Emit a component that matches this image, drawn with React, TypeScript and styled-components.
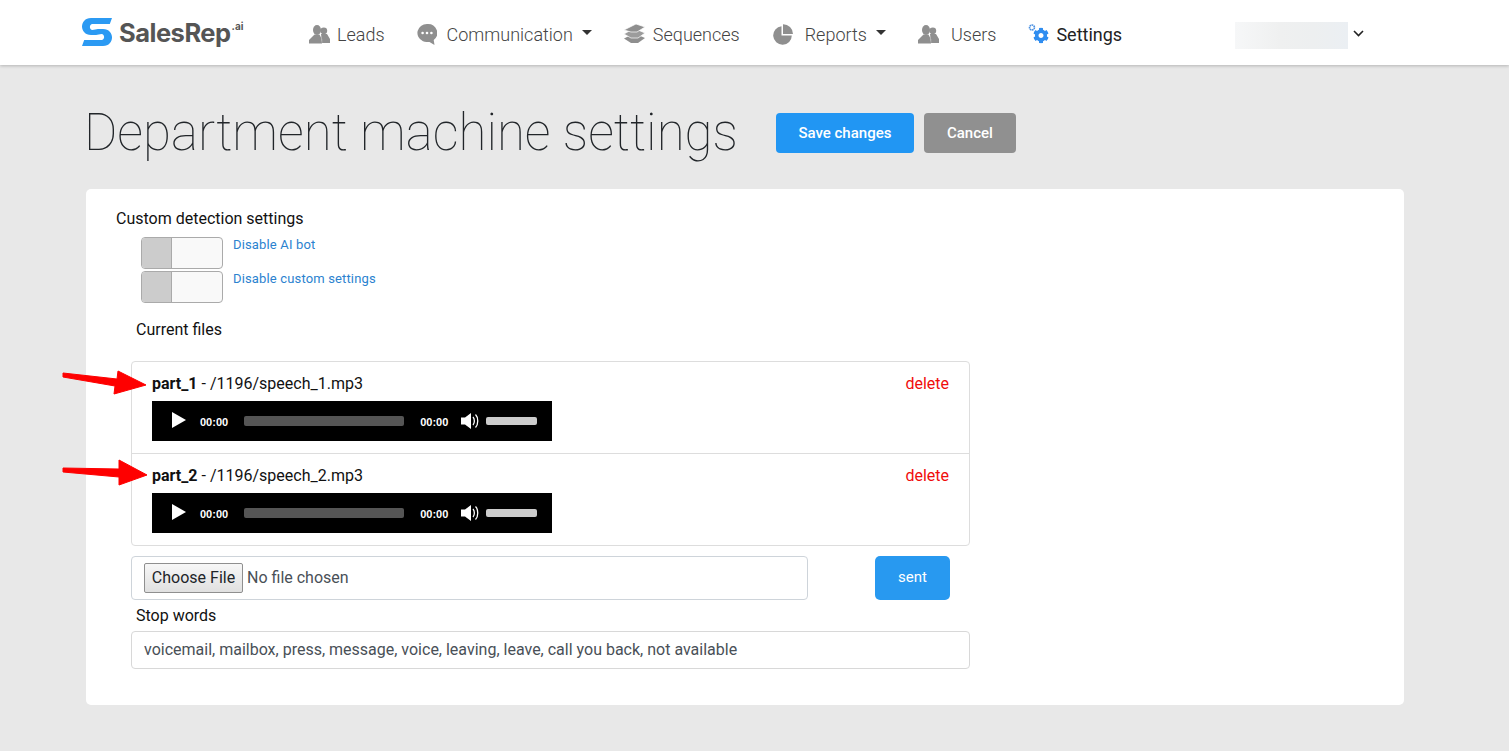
import React from "react";
import styled, { createGlobalStyle } from "styled-components";
import { FaCog } from "react-icons/fa";

const Global = createGlobalStyle`
  * { box-sizing: border-box; }
  html, body { margin: 0; padding: 0; }
  body {
    background: #e8e8e8;
    font-family: Roboto, "Liberation Sans", sans-serif;
    font-size: 16px;
    color: #111;
    overflow: hidden;
  }
`;

const Header = styled.header`
  height: 65px;
  background: #fff;
  box-shadow: 0 1px 3px rgba(0, 0, 0, 0.22);
  display: flex;
  align-items: center;
  padding-left: 82px;
`;
const Logo = styled.div`
  display: flex;
  align-items: center;
  width: 227px;
  height: 30px;
  margin-top: -1px;
`;
const LogoWord = styled.span`
  font-family: Inter, Roboto, sans-serif;
  font-weight: 700;
  font-size: 25.5px;
  letter-spacing: -0.5px;
  color: #555;
  margin-left: 7px;
`;
const LogoSup = styled.sup`
  font-family: Inter, Roboto, sans-serif;
  font-size: 10px;
  font-weight: 700;
  color: #555;
  align-self: flex-start;
  margin: 3px 0 0 1px;
`;
const Nav = styled.nav`
  display: flex;
  align-items: center;
  gap: 32px;
  margin-top: 3px;
`;
const NavItem = styled.a<{ $gap: number; $active?: boolean }>`
  display: flex;
  align-items: center;
  gap: ${(p) => p.$gap}px;
  font-size: 18px;
  font-weight: ${(p) => (p.$active ? 400 : 300)};
  color: ${(p) => (p.$active ? "#222" : "#444")};
`;
const NavLabel = styled.span`
  display: flex;
  align-items: center;
`;
const Caret = styled.i`
  width: 0;
  height: 0;
  margin-left: 9px;
  border-left: 5.5px solid transparent;
  border-right: 5.5px solid transparent;
  border-top: 5.5px solid #333;
  margin-top: -3px;
`;
const UserBlur = styled.div`
  width: 113px;
  height: 27px;
  margin-left: 113px;
  margin-top: 6px;
  background: linear-gradient(90deg, #f6f7f8, #eff0f0 40%, #edeff0 70%, #ebeff3);
`;
const Chevron = styled.svg`
  margin-left: 5px;
  margin-top: 2px;
`;

const Main = styled.main`
  padding: 47px 105px 0 86px;
`;
const TitleRow = styled.div`
  display: flex;
  align-items: center;
  height: 41px;
  margin-bottom: 36px;
`;
const Title = styled.h1`
  margin: 0 38px 0 -2px;
  font-size: 51px;
  font-weight: 100;
  line-height: 41px;
  color: #212529;
  white-space: nowrap;
`;
const Button = styled.button<{ $bg: string; $w: number }>`
  width: ${(p) => p.$w}px;
  height: 40px;
  margin-right: 10px;
  background: ${(p) => p.$bg};
  color: #fff;
  border: 0;
  border-radius: 4px;
  font: 500 15px Roboto, sans-serif;
`;
const Card = styled.section`
  background: #fff;
  border-radius: 5px;
  height: 516px;
  padding: 20px 30px 0 30px;
`;
const SectionLabel = styled.div`
  line-height: 19px;
`;
const Toggles = styled.div`
  padding: 9px 0 0 25px;
`;
const ToggleRow = styled.div`
  display: flex;
  height: 34px;
  gap: 10px;
`;
const Toggle = styled.div`
  width: 82px;
  height: 32px;
  display: flex;
  border: 1px solid #aaa;
  border-radius: 4px;
  overflow: hidden;
  background: #f9f9f9;
`;
const ToggleKnob = styled.div`
  width: 30px;
  background: #ccc;
  border-right: 1px solid #aaa;
`;
const ToggleText = styled.span`
  font-size: 13px;
  line-height: 15px;
  color: #2b82cf;
  letter-spacing: 0.15px;
`;
const SubLabel = styled.div<{ $top: number; $left: number }>`
  padding-left: ${(p) => p.$left}px;
  margin-top: ${(p) => p.$top}px;
  line-height: 19px;
`;
const Form = styled.div`
  width: 839px;
  margin-left: 15px;
`;
const FileList = styled.div`
  margin-top: 22px;
  border: 1px solid #ddd;
  border-radius: 4px;
`;
const FileRow = styled.div`
  position: relative;
  height: 91px;
  padding: 10px 20px 0;
  & + & {
    height: 92px;
    border-top: 1px solid #ddd;
  }
`;
const RowHead = styled.div`
  display: flex;
  justify-content: space-between;
  line-height: 24px;
  margin-bottom: 5px;
`;
const Delete = styled.a`
  color: #f00c0c;
`;
const Player = styled.div`
  width: 400px;
  height: 40px;
  background: #000;
  display: flex;
  align-items: center;
  color: #fff;
  font: 700 11px "Liberation Sans", Arial, sans-serif;
`;
const TimeLabel = styled.span`
  margin-top: 2px;
`;
const PlayIcon = styled.svg`
  margin-left: 20px;
  margin-right: 14px;
  margin-top: -2px;
`;
const Rail = styled.div`
  width: 160px;
  height: 10px;
  margin: 0 16px;
  background: #555;
  border-radius: 2px;
`;
const Volume = styled.div`
  width: 51px;
  height: 8px;
  margin-left: 6px;
  background: #ccc;
  border-radius: 2px;
`;
const MuteIcon = styled.svg`
  margin-left: 13px;
`;
const Arrow = styled.svg`
  position: absolute;
  left: -71px;
  top: 0;
  overflow: visible;
  pointer-events: none;
`;
const UploadRow = styled.div`
  display: flex;
  justify-content: space-between;
  margin-top: 10px;
  padding-right: 20px;
`;
const FileBox = styled.div`
  width: 677px;
  height: 44px;
  border: 1px solid #ced4da;
  border-radius: 4px;
  padding: 6px 12px;
  display: flex;
  align-items: center;
`;
const FileInput = styled.input`
  font: 400 16px Roboto, sans-serif;
  color: #495057;
  &::file-selector-button {
    height: 30px;
    width: 99px;
    margin-right: 4px;
    padding: 0 0 2px;
    font: 400 16px Roboto, sans-serif;
    color: #212529;
    background: linear-gradient(#f7f7f7, #e0e0e0);
    border: 1px solid #8f8f8f;
    border-radius: 2px;
  }
`;
const Sent = styled.button`
  width: 75px;
  height: 44px;
  background: #2899f0;
  color: #fff;
  border: 0;
  border-radius: 5px;
  padding: 0 0 2px;
  font: 400 15px Roboto, sans-serif;
`;
const TextInput = styled.input`
  display: block;
  width: 100%;
  height: 38px;
  margin-top: 6px;
  padding: 0 12px 2px;
  border: 1px solid #d8d8d8;
  border-radius: 4px;
  font: 400 16px Roboto, sans-serif;
  color: #495057;
  outline: none;
`;

const GREY = "#8f8f8f";

const UsersIcon = () => (
  <svg width="21" height="20" viewBox="0 0 21 20">
    <circle cx="14.8" cy="6.8" r="3.4" fill={GREY} />
    <path d="M12 10h6l3 5v4h-8z" fill={GREY} />
    <path d="M12.6 19.5v-4l-3-4" stroke="#fff" strokeWidth="1" fill="none" />
    <ellipse cx="8" cy="6" rx="4" ry="5" fill={GREY} />
    <path d="M5.5 10.5h5L12.5 14.5 13 19.5H0v-3.5z" fill={GREY} />
  </svg>
);
const ChatIcon = () => (
  <svg width="20" height="22" viewBox="0 0 20 22">
    <path d="M10 1a9.5 9 0 0 0 -4 17.2c2 .8 5 .8 6.500.8l5 3-.8-5A9.500 9 0 0 0 10 1z" fill={GREY} />
    <circle cx="5.600" cy="10" r="1.300" fill="#fff" />
    <circle cx="10" cy="10" r="1.300" fill="#fff" />
    <circle cx="14.400" cy="10" r="1.300" fill="#fff" />
  </svg>
);
const LayersIcon = () => (
  <svg width="21" height="20" viewBox="0 0 21 20">
    <path d="M0 14.500 7 11l7 0 7 3-7 5H7z" fill={GREY} />
    <path d="M0 10 7 6l7 0 7 3-7 5H7z" fill="#9c9c9c" stroke="#fff" strokeWidth=".7" />
    <path d="M0 6 12 0l9 3-8 5H7z" fill={GREY} stroke="#fff" strokeWidth=".7" />
  </svg>
);
const PieIcon = () => (
  <svg width="21" height="21" viewBox="0 0 21 21">
    <path d="M9.500 2.200A9.300 9.300 0 1 0 19.800 11.500H9.500z" fill={GREY} />
    <path d="M11 0.300A9.800 9.800 0 0 1 21 10H11z" fill={GREY} />
  </svg>
);
const SettingsIcon = () => (
  <svg width="21" height="20" viewBox="0 0 21 20">
    <circle cx="4" cy="3.500" r="2.500" fill="none" stroke="#4a90e2" strokeWidth="1.600" strokeDasharray="1.700 .5" />
    <FaCog x="5" y="3.500" size="16" color="#2f8df0" />
  </svg>
);

const LogoMark = () => (
  <svg width="30" height="28" viewBox="0 0 30 28">
    <path
      d="M9 0H30L27.800 6H10.500C7 6 7 12 10.500 12L16 11H21C33 11 33 28 21 28H0L2.200 22H19.500C23 22 23 16 19.500 16L14 17H9C-3 17-3 0 9 0Z"
      fill="#2b9af3"
    />
  </svg>
);

const RedArrow = ({ d }: { d: string }) => (
  <Arrow width="90" height="40">
    <path d={d} fill="#fe0000" stroke="#fe0000" strokeLinejoin="round" strokeWidth="1" />
  </Arrow>
);

const AudioPlayer = () => (
  <Player>
    <PlayIcon width="14" height="16" viewBox="0 0 14 16">
      <path d="M0 0 14 8 0 16z" fill="#fff" />
    </PlayIcon>
    <TimeLabel>00:00</TimeLabel>
    <Rail />
    <TimeLabel>00:00</TimeLabel>
    <MuteIcon width="19" height="18" viewBox="0 0 19 18">
      <path d="M0 5.500h4L10 1v16L4 12.500H0z" fill="#fff" />
      <path d="M12 5c1.800 2 1.800 6 0 8M14.500 2.500c3 3 3 10 0 13" fill="none" stroke="#fff" strokeWidth="1.300" />
    </MuteIcon>
    <Volume />
  </Player>
);

export default function App() {
  return (
    <>
      <Global />
      <Header>
        <Logo>
          <LogoMark />
          <LogoWord>SalesRep</LogoWord>
          <LogoSup>.ai</LogoSup>
        </Logo>
        <Nav>
          <NavItem $gap={7}><UsersIcon /><NavLabel>Leads</NavLabel></NavItem>
          <NavItem $gap={10}><ChatIcon /><NavLabel>Communication<Caret /></NavLabel></NavItem>
          <NavItem $gap={8}><LayersIcon /><NavLabel>Sequences</NavLabel></NavItem>
          <NavItem $gap={12}><PieIcon /><NavLabel>Reports<Caret /></NavLabel></NavItem>
          <NavItem $gap={12}><UsersIcon /><NavLabel>Users</NavLabel></NavItem>
          <NavItem $gap={7} $active><SettingsIcon /><NavLabel>Settings</NavLabel></NavItem>
        </Nav>
        <UserBlur />
        <Chevron width="11" height="7" viewBox="0 0 11 7">
          <path d="M1 1l4.500 4.500L10 1" fill="none" stroke="#222" strokeWidth="1.600" />
        </Chevron>
      </Header>
      <Main>
        <TitleRow>
          <Title>Department machine settings</Title>
          <Button $bg="#2196f3" $w={138}>Save changes</Button>
          <Button $bg="#909090" $w={92}>Cancel</Button>
        </TitleRow>
        <Card>
          <SectionLabel>Custom detection settings</SectionLabel>
          <Toggles>
            <ToggleRow>
              <Toggle><ToggleKnob /></Toggle>
              <ToggleText>Disable AI bot</ToggleText>
            </ToggleRow>
            <ToggleRow>
              <Toggle><ToggleKnob /></Toggle>
              <ToggleText>Disable custom settings</ToggleText>
            </ToggleRow>
          </Toggles>
          <SubLabel $top={15} $left={20}>Current files</SubLabel>
          <Form>
            <FileList>
              <FileRow>
                <RedArrow d="M2 11 56 17 57 9 85 23 53 32 54 24 2 15Z" />
                <RowHead>
                  <span><b>part_1</b> - /1196/speech_1.mp3</span>
                  <Delete>delete</Delete>
                </RowHead>
                <AudioPlayer />
              </FileRow>
              <FileRow>
                <RedArrow d="M2 14 58 15 58 6 86 21 58 31 58 23 2 18Z" />
                <RowHead>
                  <span><b>part_2</b> - /1196/speech_2.mp3</span>
                  <Delete>delete</Delete>
                </RowHead>
                <AudioPlayer />
              </FileRow>
            </FileList>
            <UploadRow>
              <FileBox><FileInput type="file" /></FileBox>
              <Sent>sent</Sent>
            </UploadRow>
            <SubLabel $top={6} $left={5}>Stop words</SubLabel>
            <TextInput readOnly value="voicemail, mailbox, press, message, voice, leaving, leave, call you back, not available" />
          </Form>
        </Card>
      </Main>
    </>
  );
}
